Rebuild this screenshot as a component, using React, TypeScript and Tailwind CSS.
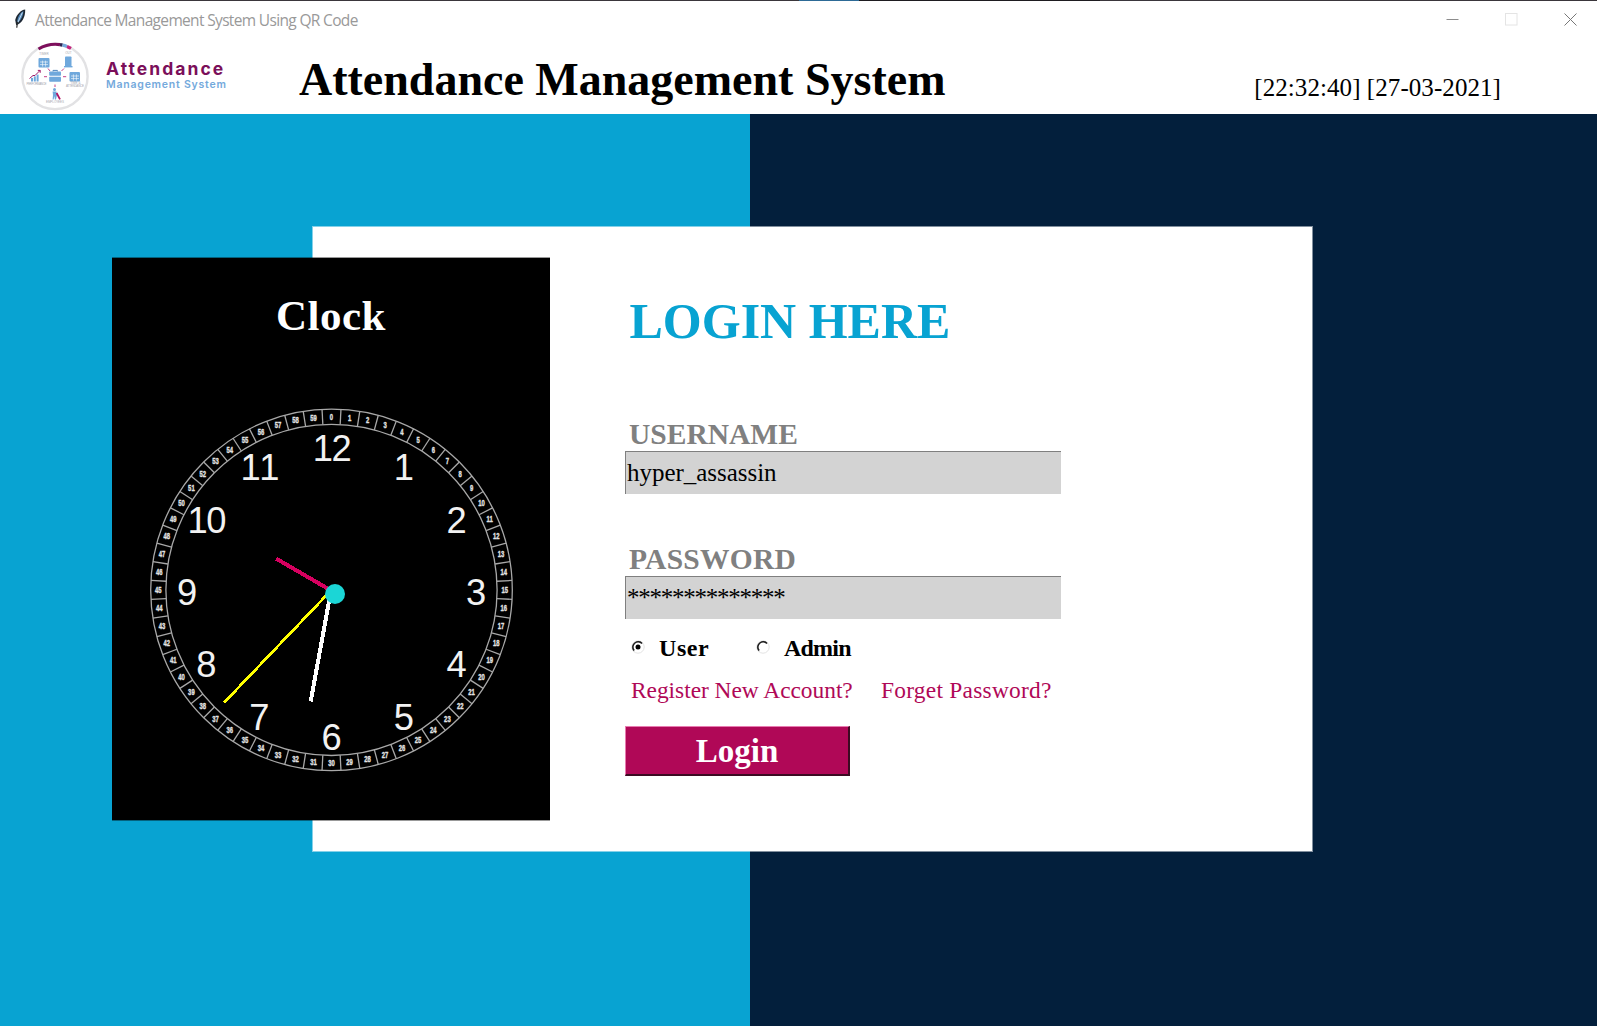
import React from "react";

const CX = 219.5;
const CY = 331.9;

const polar = (r: number, deg: number) => {
  const a = (deg * Math.PI) / 180;
  return { x: CX + r * Math.sin(a), y: CY - r * Math.cos(a) };
};

function ClockFace() {
  const ticks = Array.from({ length: 60 }, (_, i) => i);
  const hours = Array.from({ length: 12 }, (_, i) => i + 1);
  return (
    <svg width="438" height="562" viewBox="0 0 438 562" className="block">
      <g fill="none" stroke="#a8a8a8" strokeWidth="1.3">
        <circle cx={CX} cy={CY} r="180.8" />
        <circle cx={CX} cy={CY} r="165.6" />
        {ticks.map((i) => {
          const a = polar(165.6, i * 6 + 3);
          const b = polar(180.8, i * 6 + 3);
          return <line key={i} x1={a.x} y1={a.y} x2={b.x} y2={b.y} />;
        })}
      </g>
      <g
        fill="#e2e2e2"
        stroke="#e2e2e2"
        strokeWidth="0.35"
        fontFamily="Liberation Sans, Arial, sans-serif"
        fontWeight="700"
        fontSize="8.4"
        textAnchor="middle"
      >
        {ticks.map((i) => {
          const p = polar(173.2, i * 6);
          return (
            <text key={i} transform={`translate(${p.x} ${p.y + 3}) scale(0.7 1)`}>
              {i}
            </text>
          );
        })}
      </g>
      <g
        fill="#f2f2f2"
        fontFamily="Liberation Sans, Arial, sans-serif"
        fontSize="36.3"
        textAnchor="middle"
        style={{ fontKerning: "none" }}
      >
        {hours.map((h) => {
          const p = polar(144.5, h * 30);
          return (
            <text key={h} x={h > 9 ? p.x + 0.7 : p.x} y={p.y + 15.3} textLength={h > 9 ? 39 : undefined}>
              {h}
            </text>
          );
        })}
      </g>
      <line x1="219" y1="332.5" x2="164.2" y2="300.6" stroke="#d6005f" strokeWidth="4" shapeRendering="crispEdges" />
      <line x1="219" y1="332.5" x2="198.7" y2="443.5" stroke="#ffffff" strokeWidth="4" shapeRendering="crispEdges" />
      <line x1="219" y1="332.5" x2="112" y2="444.7" stroke="#ffff00" strokeWidth="2.7" shapeRendering="crispEdges" />
      <circle cx="223" cy="336" r="10" fill="#1bd6d6" />
    </svg>
  );
}

function FeatherIcon() {
  return (
    <svg width="14" height="20" viewBox="0 0 14 20" className="block">
      <path d="M12.2 0.5C8 1 3.4 5.5 2.2 11L3.2 16.2C9 14.5 12.4 8 12.2 0.5Z" fill="#1d2733" />
      <path d="M10.4 2C7 3.8 4.8 7.3 4.2 12L5.2 13.4C8.4 10.5 10.4 6.5 10.4 2Z" fill="#4f86b8" />
      <path d="M9.4 3.5L4.8 13.5" stroke="#c3d8ea" strokeWidth="1" fill="none" />
      <path d="M4.4 13L3.8 18.8" stroke="#2b2b2b" strokeWidth="1.2" fill="none" />
    </svg>
  );
}

function LogoMark() {
  const caption = { fontFamily: "Liberation Sans, Arial, sans-serif", fill: "#a8a8b0", textAnchor: "middle" as const };
  return (
    <svg width="70" height="70" viewBox="0 0 70 70" className="block">
      <circle cx="35" cy="35.5" r="32.6" fill="#fff" stroke="#e2e2e4" strokeWidth="2.4" />
      <g fill="none" strokeWidth="3.2">
        <path d="M18.5 8A33 33 0 0 1 40 3.6" stroke="#7d0f5c" />
        <path d="M40 3.6A33 33 0 0 1 42.5 4.1" stroke="#2c2350" />
        <path d="M42.5 4.1A33 33 0 0 1 47 5.4" stroke="#74a9dc" />
        <path d="M47 5.4A33 33 0 0 1 51 7.4" stroke="#c2247c" />
      </g>
      <g fill="#6fa8dc">
        <rect x="18.5" y="17" width="11" height="9.5" rx="1" />
        <rect x="45" y="15.5" width="6.5" height="10" rx="0.8" />
        <rect x="44" y="25" width="8.5" height="1.4" />
        <rect x="29.2" y="30.5" width="11.8" height="4.3" rx="0.8" />
        <rect x="29.2" y="35.8" width="11.8" height="5" rx="0.8" />
        <rect x="49.5" y="31" width="10.5" height="9.5" rx="1" />
        <rect x="11" y="37" width="2" height="3.5" />
        <rect x="13.8" y="35.4" width="2" height="5.1" />
        <rect x="16.6" y="33.6" width="2" height="6.9" />
        <circle cx="34.5" cy="48.6" r="1.5" />
        <path d="M32.6 50.4H36.4L37 54L36 58.6H34.8L34.5 55L33.6 58.6H32.6L33 54Z" />
      </g>
      <g stroke="#fff" strokeWidth="0.6" fill="none">
        <path d="M20 21H28M20 23.6H28M22.6 19.6V25.6M25.6 19.6V25.6M51 35H59M51 37.6H59M53.4 33.4V39.6M56.4 33.4V39.6" />
      </g>
      <path d="M33 30.4V29.4H37.4V30.4" stroke="#4d84bd" strokeWidth="1" fill="none" />
      <g stroke="#c4408a" strokeWidth="1" fill="none">
        <path d="M28 27.5L30 30M41.5 30L44 27.5M24 35.7H27M43 35.7H46.2M35 43.5V46" />
        <path d="M9.5 37.5L13 34.5L15 34.5L20 29.5M17.8 29.4H20.2V31.8" stroke="#a01768" />
        <path d="M36.6 52L40 58.4" stroke="#b01264" strokeWidth="1.8" />
      </g>
      <g {...caption} fontSize="3">
        <text x="24" y="14">TIMER</text>
        <text x="48.4" y="13.4">OUT</text>
        <text x="16.5" y="43.6" textLength="20">PERFORMANCE</text>
        <text x="55.4" y="43.4">TIME &amp;</text>
        <text x="55" y="46.4" textLength="18">ATTENDANCE</text>
        <text x="35" y="62.4" textLength="18">EMPLOYEES</text>
      </g>
    </svg>
  );
}

function Radio({ checked }: { checked?: boolean }) {
  return (
    <svg width="14" height="14" viewBox="0 0 14 14" className="-mt-[2px] block shrink-0">
      <circle cx="7" cy="7" r="6.2" fill="#fff" stroke="#e3e3e3" strokeWidth="1" />
      <path d="M2.8 11.2A6 6 0 0 1 11.2 2.8" fill="none" stroke="#8a8a8a" strokeWidth="1" />
      <path d="M3.2 10.6A5.2 5.2 0 0 1 11 3.6" fill="none" stroke="#1c1c1c" strokeWidth="1.5" />
      {checked && <circle cx="7" cy="7" r="2.5" fill="#000" />}
    </svg>
  );
}

function Field({ value, masked }: { value: string; masked?: boolean }) {
  return (
    <div className="h-[43px] w-[436px] overflow-hidden border-t border-l border-[#7f7f7f] bg-[#d3d3d3] pl-px text-[25px] leading-[41px] whitespace-pre text-black">
      <span className={masked ? "tracking-[-1.25px]" : "tracking-[-0.03px]"}>{value}</span>
    </div>
  );
}

export default function App() {
  return (
    <div className="flex h-[1026px] w-[1597px] flex-col overflow-hidden bg-white font-['Liberation_Serif','Times_New_Roman',serif]">
      <div className="flex h-px shrink-0 bg-[#3a363b]">
        <div className="ml-[799px] w-[60px] bg-[#2d6a96]" />
        <div className="w-[241px] bg-[#1e1c20]" />
      </div>

      <div className="flex h-[37px] shrink-0 items-center font-['Open_Sans',sans-serif]">
        <div className="-mt-px ml-[13px]">
          <FeatherIcon />
        </div>
        <span className="ml-[8px] text-[15.5px] leading-[20px] tracking-[-0.66px] whitespace-nowrap text-[#999]">
          Attendance Management System Using QR Code
        </span>
        <div className="mr-5 ml-auto flex items-center gap-[46px]">
          <svg width="13" height="13" viewBox="0 0 13 13">
            <path d="M0.5 6.5H12.5" stroke="#8c8c8c" />
          </svg>
          <svg width="13" height="13" viewBox="0 0 13 13">
            <rect x="0.5" y="0.5" width="11.5" height="11.5" fill="none" stroke="#e4e4e4" />
          </svg>
          <svg width="13" height="13" viewBox="0 0 13 13">
            <path d="M0.5 0.5L12.5 12.5M12.5 0.5L0.5 12.5" stroke="#777" fill="none" />
          </svg>
        </div>
      </div>

      <header className="flex h-[76px] shrink-0 items-start">
        <div className="mt-[3px] ml-5 w-[70px]">
          <LogoMark />
        </div>
        <div className="mt-[21px] ml-[16px] w-[193px] font-['Inter',sans-serif] whitespace-nowrap">
          <div className="text-[17.5px] leading-[20px] font-bold tracking-[2.05px] text-[#7b0f5a]">Attendance</div>
          <div className="text-[10.5px] leading-[12px] font-semibold tracking-[0.78px] text-[#74a9dc]">
            Management System
          </div>
        </div>
        <h1 className="mt-[16px] text-[46px] leading-[52px] font-bold whitespace-nowrap text-black">
          Attendance Management System
        </h1>
        <div className="mt-[34px] mr-[96px] ml-auto text-[25px] leading-[32px] tracking-[0.07px] whitespace-nowrap text-black">
          [22:32:40] [27-03-2021]
        </div>
      </header>

      <main className="flex flex-1 items-start bg-[linear-gradient(90deg,#08a3d2_750px,#031f3c_750px)]">
        <section className="mt-[112px] ml-[312px] flex h-[626px] w-[1001px] items-start border border-white/50 bg-white bg-clip-padding">
          <div className="mt-[30px] -ml-[201px] grid h-[564px] w-[438px] shrink-0 border-y border-black/40 bg-black bg-clip-padding">
            <div className="col-start-1 row-start-1">
              <ClockFace />
            </div>
            <h2 className="col-start-1 row-start-1 mt-[34px] text-center text-[43px] leading-[48px] font-bold tracking-[0.5px] text-white">
              Clock
            </h2>
          </div>

          <div className="ml-[75px] flex flex-col items-start">
            <h2 className="mt-[66px] ml-[4.5px] text-[50px] leading-[56px] font-bold whitespace-nowrap text-[#08a3d2]">
              LOGIN HERE
            </h2>
            <label className="mt-[69px] ml-[4px] text-[29.5px] leading-[33px] font-bold text-[#808080]">USERNAME</label>
            <Field value="hyper_assassin" />
            <label className="mt-[49px] ml-[4px] text-[29.5px] leading-[33px] font-bold tracking-[0.25px] text-[#808080]">
              PASSWORD
            </label>
            <Field value="**************" masked />
            <div className="mt-[14px] ml-[6px] flex h-[30px] items-center text-[24px] leading-[30px] font-bold text-black">
              <Radio checked />
              <span className="ml-[14px] w-[97px] tracking-[0.6px]">User</span>
              <Radio />
              <span className="ml-[14px] tracking-[-0.8px]">Admin</span>
            </div>
            <div className="mt-[12px] ml-[6px] flex text-[23.4px] leading-[30px] whitespace-nowrap text-[#b00857]">
              <a className="w-[250px] tracking-[-0.02px]">Register New Account?</a>
              <a className="tracking-[0.26px]">Forget Password?</a>
            </div>
            <button className="mt-[21px] h-[50px] w-[225px] border-t border-r-2 border-b-2 border-l border-t-[#e87bb0] border-r-[#3c0a22] border-b-[#3c0a22] border-l-[#e87bb0] bg-[#b00857] pt-px text-[33px] leading-[46px] font-bold text-white">
              Login
            </button>
          </div>
        </section>
      </main>
    </div>
  );
}
